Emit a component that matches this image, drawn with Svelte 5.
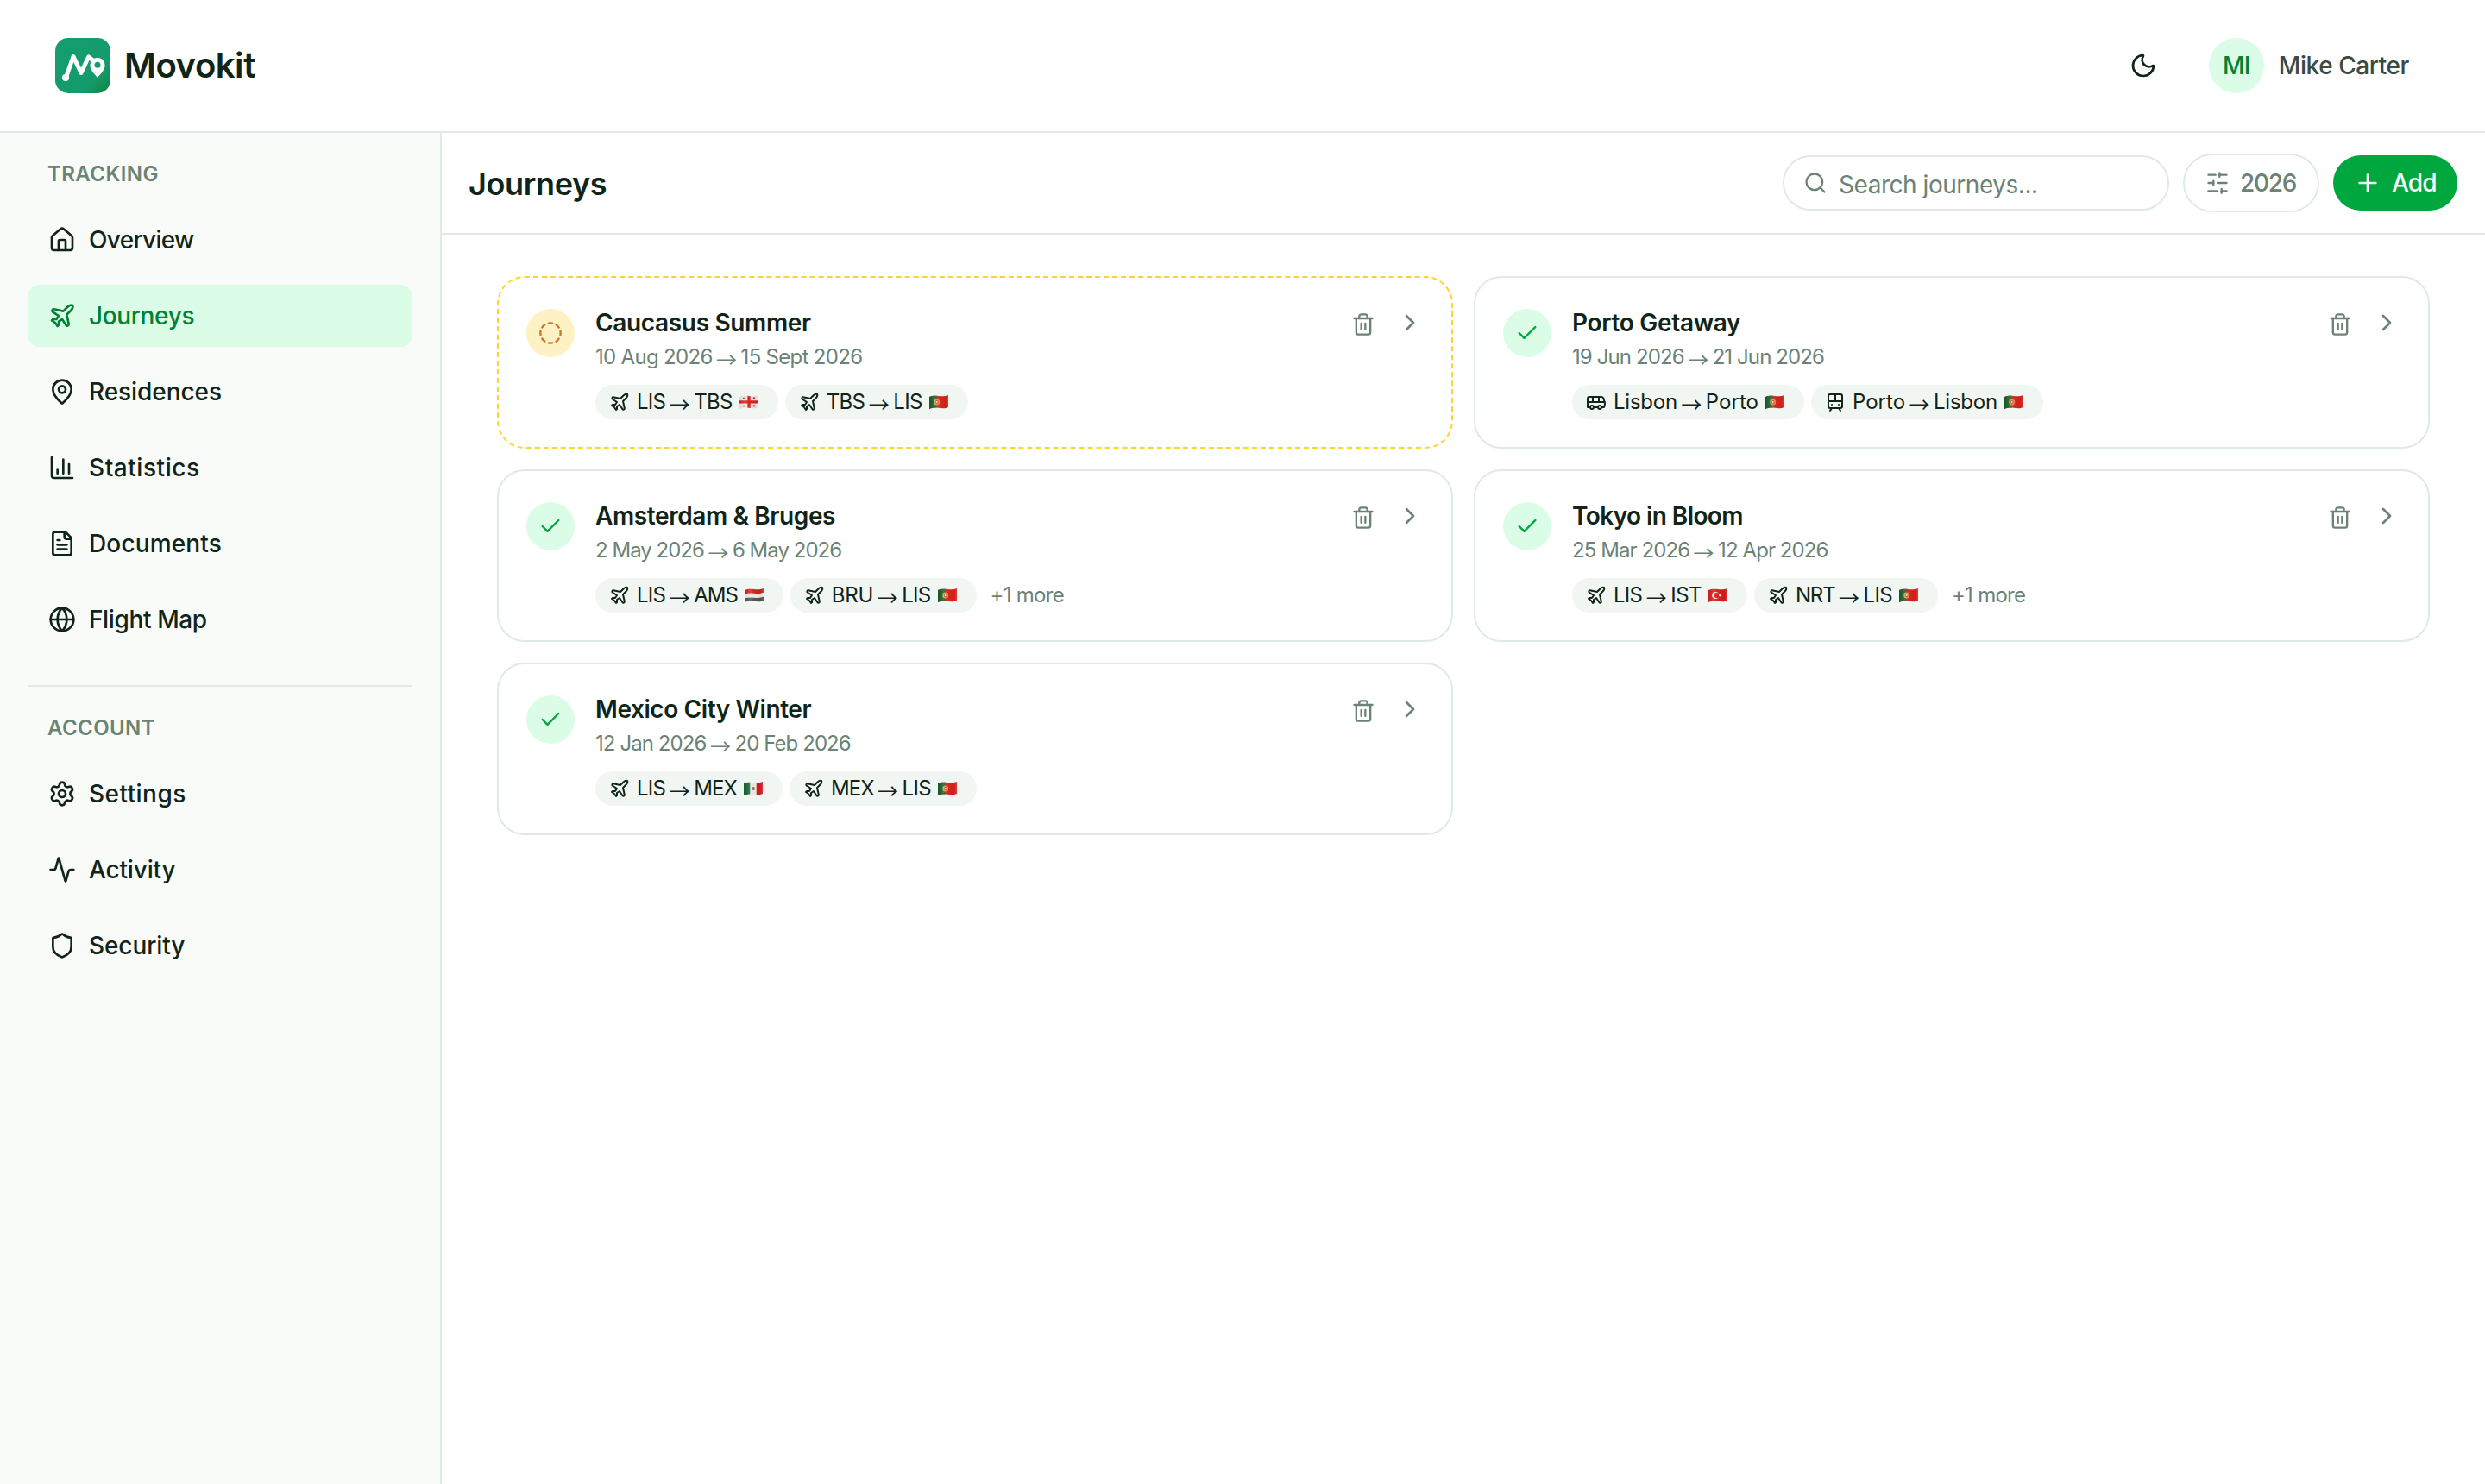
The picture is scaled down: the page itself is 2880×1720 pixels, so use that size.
<script>
  const tracking = [
    { label: 'Overview', icon: 'home', ls: -0.68 },
    { label: 'Journeys', icon: 'plane', ls: -0.36, active: true },
    { label: 'Residences', icon: 'pin', ls: -0.06 },
    { label: 'Statistics', icon: 'chart', ls: 0.54 },
    { label: 'Documents', icon: 'file', ls: 0.15 },
    { label: 'Flight Map', icon: 'globe', ls: -0.38 }
  ];
  const account = [
    { label: 'Settings', icon: 'gear', ls: 0.45 },
    { label: 'Activity', icon: 'activity', ls: -0.15 },
    { label: 'Security', icon: 'shield', ls: -0.1 }
  ];

  // Letter spacing in px for place names inside the route chips
  const placeSpacing = {
    LIS: -0.7, TBS: -0.7, AMS: -1.05, BRU: -0.2, IST: -0.6,
    NRT: -1.1, MEX: -0.95, Lisbon: -0.25, Porto: 0.02
  };

  const journeys = [
    {
      title: 'Caucasus Summer', ls: -0.34, start: '10 Aug 2026', end: '15 Sept 2026', dateLs: -0.69, planned: true,
      legs: [
        { mode: 'plane', from: 'LIS', to: 'TBS', flag: 'ge' },
        { mode: 'plane', from: 'TBS', to: 'LIS', flag: 'pt' }
      ]
    },
    {
      title: 'Porto Getaway', ls: -0.32, start: '19 Jun 2026', end: '21 Jun 2026', dateLs: -0.9,
      legs: [
        { mode: 'bus', from: 'Lisbon', to: 'Porto', flag: 'pt' },
        { mode: 'train', from: 'Porto', to: 'Lisbon', flag: 'pt' }
      ]
    },
    {
      title: 'Amsterdam & Bruges', ls: -0.4, start: '2 May 2026', end: '6 May 2026', dateLs: -0.98, more: 1,
      legs: [
        { mode: 'plane', from: 'LIS', to: 'AMS', flag: 'nl' },
        { mode: 'plane', from: 'BRU', to: 'LIS', flag: 'pt' }
      ]
    },
    {
      title: 'Tokyo in Bloom', ls: -0.58, start: '25 Mar 2026', end: '12 Apr 2026', dateLs: -0.92, more: 1,
      legs: [
        { mode: 'plane', from: 'LIS', to: 'IST', flag: 'tr' },
        { mode: 'plane', from: 'NRT', to: 'LIS', flag: 'pt' }
      ]
    },
    {
      title: 'Mexico City Winter', ls: -0.42, start: '12 Jan 2026', end: '20 Feb 2026', dateLs: -0.92,
      legs: [
        { mode: 'plane', from: 'LIS', to: 'MEX', flag: 'mx' },
        { mode: 'plane', from: 'MEX', to: 'LIS', flag: 'pt' }
      ]
    }
  ];

  // 24×24 stroke icons, each a list of path data
  const circle = (x, y, r) => `M${x - r} ${y}a${r} ${r} 0 1 0 ${2 * r} 0a${r} ${r} 0 1 0 ${-2 * r} 0`;
  const icons = {
    home: ['M15 21v-8a1 1 0 0 0-1-1h-4a1 1 0 0 0-1 1v8', 'M3 10a2 2 0 0 1 .709-1.528l7-5.999a2 2 0 0 1 2.582 0l7 5.999A2 2 0 0 1 21 10v9a2 2 0 0 1-2 2H5a2 2 0 0 1-2-2z'],
    plane: ['M17.8 19.2 16 11l3.5-3.5C21 6 21.5 4 21 3c-1-.5-3 0-4.5 1.5L13 8 4.8 6.2c-.5-.1-.9.1-1.1.5l-.3.5c-.2.5-.1 1 .3 1.3L9 12l-2 3H4l-1 1 3 2 2 3 1-1v-3l3-2 3.5 5.3c.3.4.8.5 1.3.3l.5-.2c.4-.3.6-.7.5-1.2z'],
    pin: ['M20 10c0 4.993-5.539 10.193-7.399 11.799a1 1 0 0 1-1.202 0C9.539 20.193 4 14.993 4 10a8 8 0 0 1 16 0', circle(12, 10, 3)],
    chart: ['M3 3v16a2 2 0 0 0 2 2h16', 'M18 17V9', 'M13 17V5', 'M8 17v-3'],
    file: ['M15 2H6a2 2 0 0 0-2 2v16a2 2 0 0 0 2 2h12a2 2 0 0 0 2-2V7Z', 'M14 2v4a2 2 0 0 0 2 2h4', 'M10 9H8', 'M16 13H8', 'M16 17H8'],
    globe: [circle(12, 12, 10), 'M12 2a14.5 14.5 0 0 0 0 20 14.5 14.5 0 0 0 0-20', 'M2 12h20'],
    gear: ['M9.671 4.136a2.34 2.34 0 0 1 4.659 0 2.34 2.34 0 0 0 3.319 1.915 2.34 2.34 0 0 1 2.33 4.033 2.34 2.34 0 0 0 0 3.831 2.34 2.34 0 0 1-2.33 4.033 2.34 2.34 0 0 0-3.319 1.915 2.34 2.34 0 0 1-4.659 0 2.34 2.34 0 0 0-3.32-1.915 2.34 2.34 0 0 1-2.33-4.033 2.34 2.34 0 0 0 0-3.831A2.34 2.34 0 0 1 6.35 6.051a2.34 2.34 0 0 0 3.319-1.915', circle(12, 12, 3)],
    activity: ['M22 12h-2.48a2 2 0 0 0-1.93 1.46l-2.35 8.36a.25.25 0 0 1-.48 0L9.24 2.18a.25.25 0 0 0-.48 0l-2.35 8.36A2 2 0 0 1 4.49 12H2'],
    shield: ['M20 13c0 5-3.5 7.5-7.66 8.95a1 1 0 0 1-.67-.01C7.5 20.5 4 18 4 13V6a1 1 0 0 1 1-1c2 0 4.5-1.2 6.24-2.72a1.17 1.17 0 0 1 1.52 0C14.51 3.81 17 5 19 5a1 1 0 0 1 1 1z'],
    moon: ['M20.985 12.486a9 9 0 1 1-9.473-9.472c.405-.022.617.46.402.803a6 6 0 0 0 8.268 8.268c.344-.215.825-.004.803.401'],
    search: [circle(11, 11, 8), 'm21 21-4.34-4.34'],
    sliders: ['M21 4h-7', 'M10 4H3', 'M21 12h-9', 'M8 12H3', 'M21 20h-5', 'M12 20H3', 'M14 2v4', 'M8 10v4', 'M16 18v4'],
    plus: ['M5 12h14', 'M12 5v14'],
    check: ['M20 6 9 17l-5-5'],
    dashed: ['M10.1 2.182a10 10 0 0 1 3.8 0', 'M13.9 21.818a10 10 0 0 1-3.8 0', 'M17.609 3.721a10 10 0 0 1 2.69 2.7', 'M2.182 13.9a10 10 0 0 1 0-3.8', 'M20.279 17.609a10 10 0 0 1-2.7 2.69', 'M21.818 10.1a10 10 0 0 1 0 3.8', 'M3.721 6.391a10 10 0 0 1 2.7-2.69', 'M6.391 20.279a10 10 0 0 1-2.69-2.7'],
    trash: ['M3 6h18', 'M19 6v14a2 2 0 0 1-2 2H7a2 2 0 0 1-2-2V6', 'M8 6V4a2 2 0 0 1 2-2h4a2 2 0 0 1 2 2v2', 'M10 11v6', 'M14 11v6'],
    chevron: ['m9 18 6-6-6-6'],
    bus: ['M8 6v6', 'M15 6v6', 'M2 12h19.6', 'M18 18h3s.5-1.7.8-2.8c.1-.4.2-.8.2-1.2 0-.4-.1-.8-.2-1.2l-1.4-5C20.1 6.8 19.1 6 18 6H4a2 2 0 0 0-2 2v10h3', circle(7, 18, 2), 'M9 18h5', circle(16, 18, 2)],
    train: ['M6 3h12a2 2 0 0 1 2 2v12a2 2 0 0 1-2 2H6a2 2 0 0 1-2-2V5a2 2 0 0 1 2-2z', 'M4 11h16', 'M12 3v8', 'm8 19-2 3', 'm18 22-2-3', 'M8 15h.01', 'M16 15h.01']
  };
</script>

{#snippet icon(name, size)}
  <svg class="icon" width={size} height={size} viewBox="0 0 24 24" aria-hidden="true">
    {#each icons[name] as d}<path {d} />{/each}
  </svg>
{/snippet}

{#snippet flag(code)}
  <svg class="flag" width="22" height="16" viewBox="0 0 22 16" aria-hidden="true">
    <g clip-path="url(#flag-wave)">
      {#if code === 'pt'}
        <rect width="22" height="16" fill="#e3241f" />
        <rect width="8.5" height="16" fill="#17612b" />
        <circle cx="8.7" cy="8" r="3.5" fill="#d99a45" />
        <circle cx="8.7" cy="8" r="1.9" fill="#e0452f" />
        <circle cx="8.7" cy="8" r="1" fill="#f1e9e2" />
      {:else if code === 'ge'}
        <rect width="22" height="16" fill="#eeeeec" />
        <path d="M9.3 0h3.4v16H9.3zM0 6.3h22v3.2H0z" fill="#e3241f" />
        <path d="M4 3.5h2.2M5.1 2.4v2.2M15.8 3.3H18M16.9 2.2v2.2M4 12.5h2.2M5.1 11.4v2.2M15.8 12.3H18M16.9 11.2v2.2" stroke="#e3241f" stroke-width="1.2" />
      {:else if code === 'nl'}
        <rect width="22" height="16" fill="#f2f2f1" />
        <path d="M0 0h22v4.8Q16.5 6.8 11 5.8T0 6.6z" fill="#dc2419" />
        <path d="M0 11.4Q5.5 9.8 11 10.8T22 9.4V16H0z" fill="#515957" />
      {:else if code === 'tr'}
        <rect width="22" height="16" fill="#e11f1d" />
        <circle cx="8.2" cy="8" r="4" fill="#f4e9e6" />
        <circle cx="9.5" cy="8" r="3.1" fill="#e11f1d" />
        <circle cx="13.3" cy="8" r="1.4" fill="#f4e9e6" />
      {:else}
        <rect width="22" height="16" fill="#f1f1f0" />
        <rect width="7.3" height="16" fill="#14663a" />
        <rect x="14.7" width="7.3" height="16" fill="#dc2022" />
        <circle cx="11" cy="8" r="2" fill="#93785a" />
      {/if}
      <rect width="22" height="16" fill="url(#flag-shade)" />
    </g>
  </svg>
{/snippet}

{#snippet navList(items)}
  <ul class="nav-list">
    {#each items as item}
      <li class="nav-item" class:active={item.active}>
        {@render icon(item.icon, 32)}
        <span style:letter-spacing="{item.ls}px">{item.label}</span>
      </li>
    {/each}
  </ul>
{/snippet}

<div class="app">
  <header class="topbar">
    <div class="brand">
      <svg class="logo" width="64" height="64" viewBox="0 0 64 64" aria-hidden="true">
        <defs>
          <linearGradient id="logo-bg" x1="0" y1="0" x2="1" y2="1">
            <stop offset="0" stop-color="#149d6e" />
            <stop offset="0.72" stop-color="#149b6b" />
            <stop offset="1" stop-color="#108440" />
          </linearGradient>
          <clipPath id="flag-wave">
            <path d="M0 2C3 .6 7 .3 11 1S19 1.3 22 0V14C19 15.4 15 15.5 11 14.8S3 14.7 0 16Z" />
          </clipPath>
          <linearGradient id="flag-shade">
            <stop offset="0" stop-color="#000" stop-opacity="0.1" />
            <stop offset="0.3" stop-color="#fff" stop-opacity="0.14" />
            <stop offset="0.62" stop-color="#000" stop-opacity="0.04" />
            <stop offset="0.85" stop-color="#000" stop-opacity="0.1" />
            <stop offset="1" stop-color="#fff" stop-opacity="0.1" />
          </linearGradient>
        </defs>
        <rect width="64" height="64" rx="15" fill="url(#logo-bg)" />
        <path d="M12.5 45.5 21 21.5 30 40.5 38.7 21.8 43 25.5" fill="none" stroke="#fff" stroke-width="5" stroke-linecap="round" stroke-linejoin="round" />
        <circle cx="12" cy="46" r="4.1" fill="#fff" />
        <path fill="#fff" fill-rule="evenodd" d="M49 46C46.4 42.2 40.4 37.6 40.4 31.4a8.6 8.6 0 0 1 17.2 0C57.6 37.6 51.6 42.2 49 46ZM49 27.8a3.5 3.5 0 1 0 0 7a3.5 3.5 0 1 0 0-7Z" />
      </svg>
      <span class="brand-name">Movokit</span>
    </div>
    <div class="user-area">
      <span class="theme">{@render icon('moon', 32)}</span>
      <div class="user">
        <span class="avatar">MI</span>
        <span class="user-name">Mike Carter</span>
      </div>
    </div>
  </header>

  <div class="body">
    <aside class="sidebar">
      <h2 class="group">TRACKING</h2>
      {@render navList(tracking)}
      <hr />
      <h2 class="group">ACCOUNT</h2>
      {@render navList(account)}
    </aside>

    <main>
      <div class="toolbar">
        <h1>Journeys</h1>
        <div class="search">
          {@render icon('search', 28)}
          <span>Search journeys...</span>
        </div>
        <div class="year">
          {@render icon('sliders', 28)}
          <span>2026</span>
        </div>
        <div class="add">
          {@render icon('plus', 32)}
          <span>Add</span>
        </div>
      </div>

      <section class="cards">
        {#each journeys as j}
          <article class="card" class:planned={j.planned}>
            <span class="status">{@render icon(j.planned ? 'dashed' : 'check', 28)}</span>
            <div class="info">
              <h3 style:letter-spacing="{j.ls}px">{j.title}</h3>
              <p class="dates" style:letter-spacing="{j.dateLs}px">
                <span>{j.start}</span><span class="arrow">→</span><span>{j.end}</span>
              </p>
              <div class="legs">
                {#each j.legs as leg}
                  <span class="chip">
                    {@render icon(leg.mode, 24)}
                    <span class="route">
                      <span style:letter-spacing="{placeSpacing[leg.from]}px">{leg.from}</span><span class="arrow">→</span><span style:letter-spacing="{placeSpacing[leg.to]}px">{leg.to}</span>
                    </span>
                    {@render flag(leg.flag)}
                  </span>
                {/each}
                {#if j.more}<span class="more">+{j.more} more</span>{/if}
              </div>
            </div>
            <div class="actions">
              <span class="trash">{@render icon('trash', 28)}</span>
              {@render icon('chevron', 32)}
            </div>
          </article>
        {/each}
      </section>
    </main>
  </div>
</div>

<style>
  :global(body) {
    margin: 0;
    background: #fff;
  }
  .app {
    height: 1720px;
    display: flex;
    flex-direction: column;
    overflow: hidden;
    background: #fff;
    color: #102418;
    font-family: Inter, 'Liberation Sans', sans-serif;
    font-size: 28px;
    font-weight: 460;
    line-height: 40px;
  }
  .app :is(h1, h2, h3, p, ul) {
    margin: 0;
    padding: 0;
  }
  .app span {
    white-space: nowrap;
  }
  .icon {
    display: block;
    flex: none;
    fill: none;
    stroke: currentColor;
    stroke-width: 2;
    stroke-linecap: round;
    stroke-linejoin: round;
  }

  .topbar {
    height: 152px;
    flex: none;
    display: flex;
    align-items: center;
    justify-content: space-between;
    padding: 0 88px 0 64px;
    border-bottom: 2px solid #dfeae6;
  }
  .brand {
    display: flex;
    align-items: center;
    gap: 16px;
  }
  .logo {
    display: block;
  }
  .brand-name {
    font-size: 40px;
    font-weight: 570;
    letter-spacing: -0.45px;
    line-height: 56px;
  }
  .user-area,
  .user {
    display: flex;
    align-items: center;
  }
  .user-area {
    gap: 60px;
  }
  .user {
    gap: 17px;
    width: 232px;
  }
  .avatar {
    width: 64px;
    height: 64px;
    border-radius: 50%;
    display: grid;
    place-items: center;
    background: #dbfce7;
    color: #008236;
    font-weight: 550;
    letter-spacing: -0.6px;
  }
  .user-name {
    color: #3a4b41;
    letter-spacing: -0.42px;
  }

  .body {
    flex: 1;
    min-height: 0;
    display: flex;
  }
  .sidebar {
    box-sizing: border-box;
    width: 512px;
    flex: none;
    padding: 32px;
    background: #f9fbf9;
    border-right: 2px solid #dfeae6;
  }
  .group {
    font-size: 24px;
    line-height: 32px;
    font-weight: 600;
    letter-spacing: 0.42px;
    color: #6b8375;
  }
  .sidebar .group {
    padding: 0 23px;
  }
  .nav-list {
    list-style: none;
    display: flex;
    flex-direction: column;
    gap: 16px;
  }
  .sidebar .nav-list {
    margin-top: 24px;
  }
  .nav-item {
    height: 72px;
    display: flex;
    align-items: center;
    gap: 15px;
    padding: 0 24px;
    border-radius: 14px;
  }
  .nav-item.active {
    background: #dbfce7;
    color: #008236;
  }
  hr {
    height: 2px;
    margin: 40px 0 32px;
    border: 0;
    background: #dfeae6;
  }

  main {
    flex: 1;
    min-width: 0;
  }
  .toolbar {
    box-sizing: border-box;
    height: 118px;
    display: flex;
    align-items: center;
    gap: 16px;
    padding: 0 32px 0 31px;
    border-bottom: 2px solid #dfeae6;
  }
  .toolbar h1 {
    margin-right: auto;
    padding-top: 2px;
    font-size: 36px;
    font-weight: 570;
    letter-spacing: -0.35px;
  }
  .search,
  .year,
  .add {
    box-sizing: border-box;
    display: flex;
    align-items: center;
    gap: 12px;
    border-radius: 34px;
    color: #6b8375;
  }
  .search {
    width: 448px;
    height: 64px;
    padding: 0 22px;
    gap: 13px;
    border: 2px solid #dfeae6;
    font-weight: 400;
    letter-spacing: -0.46px;
  }
  .search span {
    padding-top: 3px;
  }
  .year {
    width: 158px;
    height: 68px;
    padding: 0 24px;
    border: 2px solid #dfeae6;
    letter-spacing: -1.25px;
  }
  .add {
    width: 144px;
    height: 64px;
    padding: 0 24px;
    background: #00a63e;
    color: #fff;
    font-weight: 550;
    letter-spacing: -0.8px;
  }

  .cards {
    display: grid;
    grid-template-columns: 1fr 1fr;
    gap: 24px;
    padding: 48px 64px;
  }
  .card {
    box-sizing: border-box;
    height: 200px;
    display: flex;
    align-items: flex-start;
    padding: 32px;
    border: 2px solid #dfeae6;
    border-radius: 32px;
  }
  .card.planned {
    border: 2px dashed #ffd230;
  }
  .status {
    width: 56px;
    height: 56px;
    flex: none;
    margin: 4px 24px 0 0;
    border-radius: 50%;
    display: grid;
    place-items: center;
    background: #dbfce7;
    color: #00a63e;
  }
  .planned .status {
    background: #fef1c4;
    color: #c9782f;
  }
  .info {
    flex: 1;
  }
  h3 {
    font-size: 28px;
    font-weight: 580;
    line-height: 40px;
  }
  .dates {
    display: flex;
    font-size: 24px;
    font-weight: 400;
    line-height: 32px;
    color: #6b8375;
  }
  .info .dates {
    margin-top: 4px;
  }
  .arrow {
    width: 33px;
    display: flex;
    justify-content: center;
    padding-top: 3px;
    font-family: 'Noto Sans CJK SC', sans-serif;
    font-weight: 400;
    letter-spacing: 0;
    line-height: 29px;
    height: 29px;
  }
  .legs {
    display: flex;
    align-items: center;
    gap: 8px;
    margin-top: 16px;
    font-size: 24px;
    line-height: 32px;
    font-weight: 400;
  }
  .chip {
    height: 40px;
    display: flex;
    align-items: center;
    gap: 8px;
    padding: 0 16px;
    border-radius: 20px;
    background: #f1f6f3;
  }
  .route {
    display: flex;
  }
  .flag {
    display: block;
    margin: 0 7px 0 0;
  }
  .more {
    padding-left: 8px;
    letter-spacing: -0.73px;
    color: #6b8375;
  }
  .actions {
    display: flex;
    align-items: center;
    gap: 24px;
    margin-top: 4px;
    color: #6b8375;
  }
  .trash {
    padding-top: 4px;
  }
</style>
